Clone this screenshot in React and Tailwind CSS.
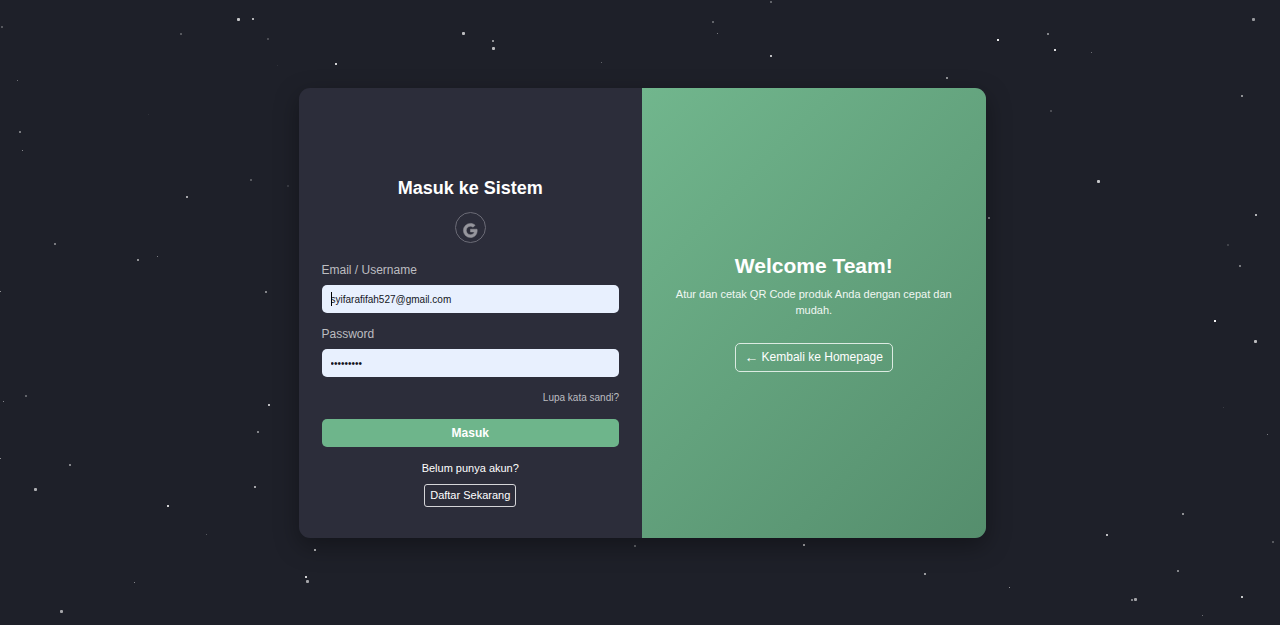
import { BiLogoGoogle } from "react-icons/bi";

// Each star: [x, y, size, opacity]
const STARS = [
  [237, 18, 3, 0.75], [252, 18, 2, 0.65], [180, 33, 2, 0.25], [1, 26, 2, 0.25], [267, 38, 2, 0.2],
  [17, 80, 1, 0.35], [19, 131, 2, 0.4], [22, 150, 1, 0.45], [148, 114, 1, 0.08], [277, 65, 1, 0.08],
  [250, 179, 2, 0.25], [287, 185, 2, 0.12], [186, 196, 2, 0.6], [54, 243, 2, 0.4], [137, 259, 2, 0.5],
  [157, 256, 1, 0.4], [0, 291, 1, 0.5], [265, 291, 2, 0.45],
  [25, 395, 2, 0.3], [3, 401, 1, 0.45], [268, 404, 2, 0.7], [257, 431, 2, 0.45], [0, 458, 1, 0.5],
  [69, 464, 2, 0.45], [34, 488, 3, 0.65], [254, 486, 2, 0.6], [167, 505, 2, 0.8], [206, 534, 1, 0.25],
  [314, 549, 2, 0.65], [305, 576, 2, 0.8], [306, 580, 3, 0.6], [134, 582, 1, 0.45], [60, 610, 3, 0.6],
  [335, 63, 2, 0.8], [462, 32, 3, 0.7], [492, 40, 2, 0.5], [492, 47, 3, 0.7], [601, 62, 1, 0.3],
  [712, 21, 2, 0.3], [717, 33, 1, 0.4], [770, 1, 2, 0.3], [770, 55, 2, 0.7], [946, 77, 2, 0.5],
  [997, 39, 2, 0.9], [1047, 33, 2, 0.45], [1054, 49, 2, 0.85], [1091, 52, 1, 0.35], [1252, 18, 3, 0.55],
  [1241, 95, 2, 0.5], [1050, 110, 2, 0.2], [1097, 180, 3, 0.75], [988, 217, 2, 0.4], [1255, 214, 2, 0.65],
  [1227, 244, 2, 0.15], [1239, 265, 2, 0.4], [1214, 320, 2, 0.95], [1254, 340, 3, 0.7], [1223, 407, 1, 0.12],
  [1267, 434, 1, 0.4], [1182, 513, 2, 0.5], [1106, 534, 2, 0.7], [1272, 541, 2, 0.25], [1177, 570, 2, 0.45],
  [1009, 587, 1, 0.5], [1131, 599, 2, 0.45], [1134, 598, 3, 0.6], [1241, 596, 2, 0.75], [1202, 615, 1, 0.35],
  [634, 545, 2, 0.3], [803, 544, 2, 0.6], [924, 573, 2, 0.55],
];

function Starfield() {
  return (
    <svg
      className="absolute inset-0 h-full w-full"
      viewBox="0 0 1280 625"
      preserveAspectRatio="xMidYMid slice"
      aria-hidden="true"
    >
      {STARS.map(([x, y, size, opacity]) => (
        <rect
          key={`${x}-${y}`}
          x={x}
          y={y}
          width={size}
          height={size}
          rx={size === 3 ? 1 : 0}
          fill="#ffffff"
          opacity={opacity}
        />
      ))}
    </svg>
  );
}

function Field({ id, label, focused, ...inputProps }) {
  return (
    <div className="mt-[13px] flex flex-col gap-[7px]">
      <label htmlFor={id} className="text-xs leading-4 text-[#bdbdc1]">
        {label}
      </label>
      <div className="relative">
        <input
          id={id}
          className="h-7 w-full rounded-[5px] bg-[#e8f0fe] px-[9px] pt-0.5 text-[10px] text-[#14161c] outline-none"
          {...inputProps}
        />
        {focused && <span className="absolute top-[7px] left-[9px] h-3.5 w-px bg-black" />}
      </div>
    </div>
  );
}

function LoginForm() {
  return (
    <form
      className="flex flex-1 flex-col px-[23px] pt-[88px] pb-[31px]"
      onSubmit={(event) => event.preventDefault()}
    >
      <h1 className="text-center text-lg leading-6 font-bold text-white">Masuk ke Sistem</h1>
      <button
        type="button"
        aria-label="Google"
        className="mt-3 mb-1.5 flex size-[31px] items-center justify-center self-center rounded-full border border-[#6b6b76] pt-1.5 text-[#96969d]"
      >
        <BiLogoGoogle size={19} stroke="currentColor" strokeWidth={0.6} />
      </button>
      <Field id="email" label="Email / Username" type="text" defaultValue="syifarafifah527@gmail.com" focused />
      <Field id="password" label="Password" type="password" defaultValue="rahasia12" />
      <a href="#lupa" className="mt-[13px] self-end text-[10px] leading-4 text-[#bdbdc1]">
        Lupa kata sandi?
      </a>
      <button type="submit" className="mt-[13px] h-7 rounded-[5px] bg-[#6eb58b] text-xs font-bold text-white">
        Masuk
      </button>
      <p className="mt-[13px] text-center text-[11px] leading-4 text-white">Belum punya akun?</p>
      <a
        href="#daftar"
        className="mt-2 flex h-[23px] items-center self-center rounded-[3px] border border-[#d5d5d8] px-[5px] text-[11px] text-white"
      >
        Daftar Sekarang
      </a>
    </form>
  );
}

function WelcomePanel() {
  return (
    <section className="flex flex-1 flex-col items-center justify-center bg-linear-135 from-[#71b68d] to-[#558e6d] px-[23px] text-center text-white">
      <h2 className="text-[21px] leading-6 font-bold">Welcome Team!</h2>
      <p className="mt-2 text-[11px] leading-4 text-[#f0f7f3]">
        Atur dan cetak QR Code produk Anda dengan cepat dan mudah.
      </p>
      <a
        href="#home"
        className="mt-[25px] flex h-[29px] items-center gap-[3px] rounded-[5px] border border-[#dcebe2] px-[9px] text-xs"
      >
        <span className="text-sm">←</span>
        Kembali ke Homepage
      </a>
    </section>
  );
}

export default function App() {
  return (
    <main className="relative flex min-h-screen items-center justify-center bg-[#1e2029] pl-1 font-['Liberation_Sans',Arial,sans-serif]">
      <Starfield />
      <div className="relative flex w-full max-w-[687px] overflow-hidden rounded-[11px] bg-[#2c2d3a] shadow-[0_8px_24px_rgba(0,0,0,0.35)]">
        <LoginForm />
        <WelcomePanel />
      </div>
    </main>
  );
}
